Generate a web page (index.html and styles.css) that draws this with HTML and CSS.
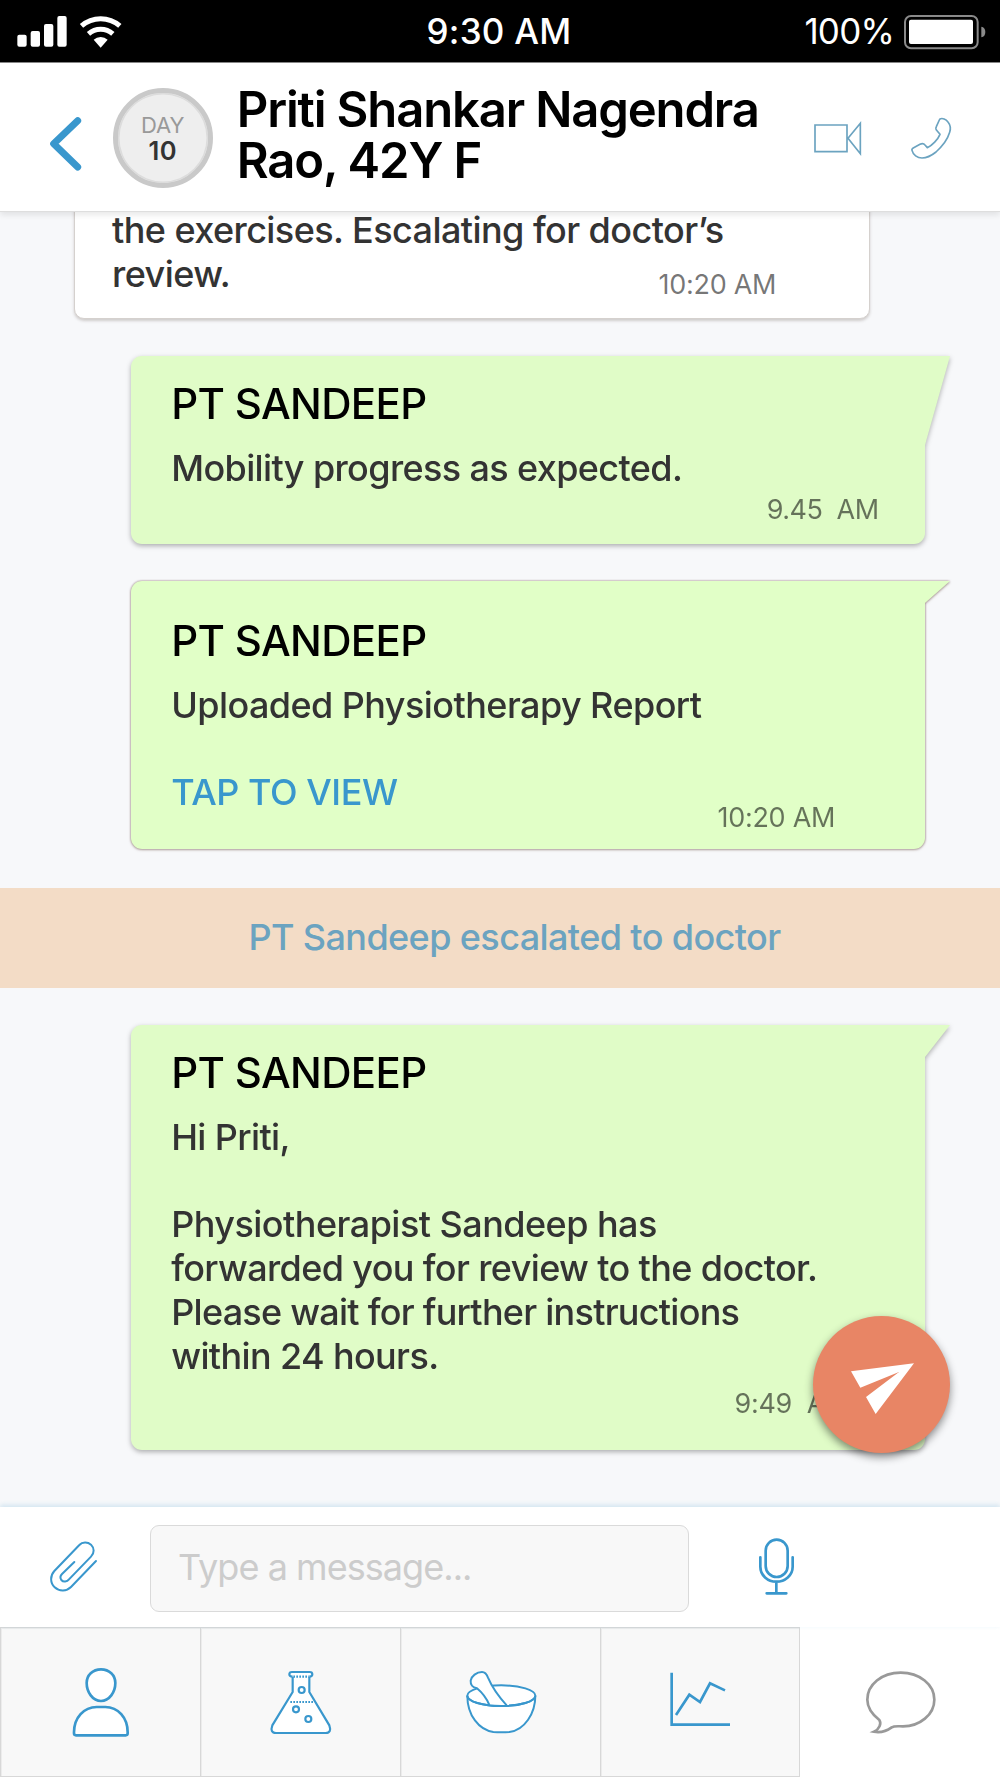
FILE: index.html
```html
<!DOCTYPE html>
<html lang="en">
<head>
<meta charset="utf-8">
<title>Patient chat</title>
<link rel="stylesheet" href="styles.css">
</head>
<body>
<div class="phone">
  <div class="status">
    <svg class="status-signal" viewBox="51 36 318 117">
      <g fill="#fff">
        <rect x="52" y="104" width="28" height="36" rx="6"/>
        <rect x="92" y="93" width="28" height="47" rx="6"/>
        <rect x="132" y="72" width="28" height="68" rx="6"/>
        <rect x="172" y="48" width="28" height="92" rx="6"/>
        <path d="M302 143L281 119.500A31 31 0 0 1 323 119.500Z"/>
      </g>
      <g fill="none" stroke="#fff" stroke-width="15">
        <path d="M244.500 77.500A87.500 87.500 0 0 1 359.500 77.500"/>
        <path d="M265.500 101.500A55.500 55.500 0 0 1 338.500 101.500"/>
      </g>
    </svg>
    <span class="status-time">9:30 AM</span>
    <span class="status-battery">
      <span class="status-percent">100%</span>
      <svg class="battery" viewBox="1212 42 246 108">
        <rect x="1215" y="48" width="218" height="97" rx="18" fill="none" stroke="#8a8a8a" stroke-width="6"/>
        <rect x="1227" y="59" width="192" height="73" rx="6" fill="#fff"/>
        <path d="M1444 80q12 2 12 16t-12 16z" fill="#8a8a8a"/>
      </svg>
    </span>
  </div>

  <header class="header">
    <svg class="back" viewBox="147 348 99 168"><path d="M233 362L161 431L233 501" fill="none" stroke="#3997cd" stroke-width="21" stroke-linecap="round" stroke-linejoin="round"/></svg>
    <div class="day"><span class="day-label">DAY</span><span class="day-number">10</span></div>
    <h1 class="title">Priti Shankar Nagendra<br>Rao, 42Y F</h1>
    <svg class="video" viewBox="39 60 150 108"><path d="M45 75H141V155H45ZM144 115L181 70V161Z" fill="none" stroke="#6ba3c0" stroke-width="5"/></svg>
    <svg class="call" viewBox="327 48 132 135"><path d="M420 57C427 53 438 58 444 66C452 76 452 88 449 97C444 114 428 138 408 156C393 168 378 174 366 174C352 174 339 164 336 151C335 148 337 145 341 143L360 133C366 130 371 130 375 135L382 143C396 137 414 118 420 103L411 92C407 89 407 83 409 80L418 60Q419 58 420 57Z" fill="none" stroke="#6ba3c0" stroke-width="5" stroke-linejoin="round"/></svg>
  </header>

  <main class="chat">
    <article class="incoming">
      <p class="text">the exercises. Escalating for doctor’s<br>review.</p>
      <time class="time">10:20 AM</time>
    </article>
    <article class="bubble bubble-mobility">
      <h2 class="name">PT SANDEEP</h2>
      <p class="text">Mobility progress as expected.</p>
      <time class="time">9.45&nbsp; AM</time>
    </article>
    <article class="bubble bubble-report">
      <h2 class="name">PT SANDEEP</h2>
      <p class="text">Uploaded Physiotherapy Report<br><br><a class="view">TAP TO VIEW</a></p>
      <time class="time">10:20 AM</time>
    </article>
    <div class="banner">PT Sandeep escalated to doctor</div>
    <article class="bubble bubble-forwarded">
      <h2 class="name">PT SANDEEP</h2>
      <p class="text">Hi Priti,<br><br><span class="looser">Physiotherapist Sandeep has</span><br>forwarded you for review to the doctor.<br><span class="tighter">Please wait for further instructions</span><br>within 24 hours.</p>
      <time class="time">9:49&nbsp; AM</time>
    </article>
    <button class="send" aria-label="Send"><svg class="send-icon" viewBox="639 1008 411 411"><path d="M753 1174L942 1150L827 1302L798 1251L897 1176L781 1223Z" fill="#fff"/></svg></button>
  </main>

  <div class="composer">
    <svg class="clip" viewBox="144 147 153 162"><path d="M288 213L213 291C200 304 178 305 164 292C150 279 150 257 163 243L238 165C247 155 263 155 273 164C283 174 284 189 273 200L207 268C201 276 190 277 184 270C180 264 181 257 186 252L223 216" fill="none" stroke="#3997cd" stroke-width="6" stroke-linecap="round"/></svg>
    <div class="input">Type a message...</div>
    <svg class="mic" viewBox="771 141 117 180"><g fill="none" stroke="#3997cd" stroke-width="8" stroke-linecap="round"><rect x="797" y="149" width="66" height="112" rx="33"/><path d="M781 202V230C781 256 803 275 829 275S878 256 878 230V202M829 275V310M800 310H859"/></g></svg>
  </div>

  <nav class="tabs">
    <div class="tab"><svg class="tab-icon" viewBox="180 516 240 240"><g fill="#fff" stroke="#3997cd" stroke-width="8"><path d="M303 538c25 0 43 18 43 41 0 27-18 54-43 54s-43-27-43-54c0-23 18-41 43-41z"/><path d="M290 651h26c38 0 67 32 67 76v3q0 6-6 6H228q-6 0-6-6v-3c0-44 30-76 68-76z"/></g></svg></div>
    <div class="tab"><svg class="tab-icon" viewBox="780 516 240 240"><g fill="#fff" stroke="#3997cd" stroke-width="6.500"><path d="M878 560V606L817 706Q809 729 828 729H977Q996 729 988 706L928 606V560"/><path d="M878 560q-10 0-10-7 0-7 8-7h53q8 0 8 7 0 7-9 7"/><path d="M880 560H928M871 636H942" stroke-dasharray="5 4"/><circle cx="905" cy="600" r="9"/><circle cx="888" cy="658" r="9"/><circle cx="925" cy="687" r="9"/></g></svg></div>
    <div class="tab"><svg class="tab-icon" viewBox="0 6 240 240"><g fill="#fff" stroke="#3997cd" stroke-width="6"><path d="M22 107C22 166 57 210 100 216Q124 218 148 216C194 210 226 160 226 107"/><ellipse cx="124" cy="107" rx="102" ry="31"/><path d="M88 135Q76 106 51 85C38 83 31 73 32 62C34 48 50 36 66 36C75 36 81 45 84 53C98 86 118 112 140 136"/><path d="M22 107C22 124 68 138 124 138S226 124 226 107" fill="none"/></g></svg></div>
    <div class="tab"><svg class="tab-icon" viewBox="480 516 240 240"><g fill="none" stroke="#3997cd" stroke-width="8"><path d="M515 548V704H690M528 675L568 614L600 636L630 580L675 601"/></g></svg></div>
    <div class="tab tab-active"><svg class="tab-icon" viewBox="1080 516 240 240"><path d="M1202 548C1259 548 1303 584 1303 629S1259 709 1209 709C1194 709 1183 707 1175 712C1160 723 1144 729 1122 725C1138 718 1145 700 1138 690C1118 674 1102 655 1102 629C1102 584 1145 548 1202 548Z" fill="none" stroke="#999" stroke-width="8"/></svg></div>
  </nav>
</div>
</body>
</html>
```
FILE: styles.css
```css
* { box-sizing: border-box; }

body {
  margin: 0;
  font-family: Inter, "Liberation Sans", sans-serif;
  color: #333;
}

h1, h2, p { margin: 0; }
svg { display: block; flex: none; }

.phone {
  display: flex;
  flex-direction: column;
  width: 1000px;
  height: 1778px;
  overflow: hidden;
  background: #f7f8fa;
}

/* Status bar */
.status {
  display: grid;
  grid-template-columns: 1fr auto 1fr;
  align-items: center;
  flex: none;
  height: 63px;
  padding: 0 14px 0 17px;
  border-bottom: 1px solid #888;
  background: #000;
  color: #fff;
  font-size: 35px;
  line-height: 62px;
}
.status-signal { width: 106px; height: 39px; }
.status-time { padding-right: 5px; font-weight: 500; letter-spacing: .25px; }
.status-battery { display: flex; justify-content: flex-end; align-items: center; gap: 10px; }
.status-percent { letter-spacing: -.8px; }
.battery { width: 82px; height: 36px; margin-top: 1px; }

/* Header */
.header {
  display: flex;
  align-items: flex-start;
  flex: none;
  position: relative;
  z-index: 1;
  height: 149px;
  padding: 20px 47px 0 49px;
  border-bottom: 1px solid #dedede;
  background: #fff;
  box-shadow: 0 3px 6px rgba(0, 0, 0, .09);
}
.back { width: 33px; height: 56px; margin-top: 33px; }
.day {
  display: flex;
  flex-direction: column;
  align-items: center;
  flex: none;
  width: 100px;
  height: 100px;
  margin: 4.500px 0 0 30.700px;
  padding-top: 18px;
  border: 5px solid #c9c9c9;
  border-radius: 50%;
  background: #eee;
  box-shadow: inset 0 0 0 1.500px #dcdcdc;
}
.day-label { color: #999; font-size: 22px; line-height: 28px; }
.day-number { font-size: 25.500px; font-weight: 600; line-height: 24px; letter-spacing: .5px; }
.title {
  width: 576px;
  margin: 1px 0 0 24px;
  color: #000;
  font-size: 49px;
  font-weight: 600;
  line-height: 51px;
  letter-spacing: -1.150px;
  white-space: nowrap;
}
.video { width: 50px; height: 36px; margin-top: 37px; }
.call { width: 44px; height: 45px; margin: 33px 0 0 46px; }

/* Conversation */
.chat { position: relative; flex: 1; min-height: 0; overflow: hidden; }
.text {
  font-size: 36px;
  font-weight: 500;
  line-height: 43.700px;
  letter-spacing: -.630px;
  white-space: nowrap;
}
.looser { letter-spacing: -.540px; }
.tighter { letter-spacing: -.740px; }
.time {
  display: block;
  width: max-content;
  color: rgba(0, 0, 0, .55);
  font-size: 27px;
  line-height: 34px;
  letter-spacing: -.280px;
  white-space: nowrap;
}
.name {
  margin-bottom: 18.300px;
  color: #000;
  font-size: 42px;
  font-weight: 500;
  line-height: 50px;
  letter-spacing: -.670px;
}
.incoming {
  width: 796px;
  height: 127px;
  margin: -20px 0 0 74px;
  padding: 16px 37px 0;
  border: 1px solid #d5d1ce;
  border-radius: 10px;
  background: #fff;
  box-shadow: 0 2px 3px rgba(70, 50, 40, .22);
}
.incoming .text { letter-spacing: -.570px; }
.incoming .time { margin: -28.700px 0 0 546.500px; }

.bubble {
  position: relative;
  width: 794px;
  margin: 37px 0 0 131px;
  padding: 22.700px 0 0 40.200px;
  border-radius: 11px 0 11px 11px;
  background: #e0fcc7;
  filter: drop-shadow(0 2px 2.500px rgba(0, 0, 0, .3));
}
/* Pointed tail at the top right corner */
.bubble::after {
  content: "";
  position: absolute;
  top: 0;
  left: 793px;
  width: 26px;
  height: 32px;
  background: inherit;
  clip-path: polygon(0 0, 100% 0, 1px 100%, 0 100%);
}
.bubble-mobility { height: 187.500px; }
.bubble-mobility::after { height: 89px; }
.bubble-mobility .time { margin: 2.500px 0 0 595.500px; letter-spacing: -.5px; }
.bubble-report {
  height: 267.500px;
  margin-top: 37.500px;
  padding-top: 34.700px;
  background: #e1ffc7;
  filter: drop-shadow(0 0 1px rgba(110, 70, 80, .65)) drop-shadow(0 1px 1px rgba(80, 50, 30, .25));
}
.bubble-report::after { height: 22px; }
.bubble-report .text { letter-spacing: -.570px; }
.bubble-report .time { margin: -14.300px 0 0 546.300px; }
.bubble-forwarded { height: 425px; margin-top: 37.500px; }
.bubble-forwarded .time { margin: 8.700px 0 0 563.300px; }
.view { color: #3997cd; letter-spacing: -.450px; }

.banner {
  height: 100px;
  margin-top: 39px;
  padding-left: 29px;
  background: #f3dcc6;
  color: #6ba3c0;
  font-size: 36px;
  font-weight: 500;
  line-height: 99px;
  letter-spacing: -.600px;
  text-align: center;
}

.send {
  position: absolute;
  right: 50px;
  bottom: 54px;
  width: 137px;
  height: 137px;
  padding: 0;
  border: 0;
  border-radius: 50%;
  background: #e88565;
  box-shadow: 0 4px 8px rgba(0, 0, 0, .45);
}
.send-icon { width: 137px; height: 137px; }

/* Message composer */
.composer {
  display: flex;
  align-items: center;
  flex: none;
  position: relative;
  z-index: 1;
  height: 120px;
  padding-left: 48px;
  background: #fff;
  box-shadow: 0 -2px 5px rgba(57, 151, 205, .2);
}
.clip { width: 51px; height: 54px; margin-bottom: 2px; }
.input {
  width: 539px;
  height: 87px;
  margin: 2px 68px 0 51px;
  padding-left: 27px;
  border: 1px solid #dadada;
  border-radius: 9px;
  background: #f8f8f8;
  color: #ccc;
  font-size: 36px;
  line-height: 82px;
  letter-spacing: -.950px;
}
.mic { width: 39px; height: 60px; }

/* Bottom tabs */
.tabs { display: grid; grid-template-columns: repeat(5, 200px); flex: none; height: 151px; background: #fff; }
.tab {
  display: grid;
  place-items: center;
  height: 150px;
  padding-right: 1px;
  border: solid #d8d8d8;
  border-width: 1px 0 1px 1px;
  background: #f8f8f8;
  box-shadow: inset 1px 1px 0 #ececec;
}
.tab:nth-child(4) { padding-right: 0; border-right-width: 1px; }
.tab-active { padding-right: 2px; border-color: transparent; background: #fff; box-shadow: none; }
.tab-icon { width: 80px; height: 80px; }
```
